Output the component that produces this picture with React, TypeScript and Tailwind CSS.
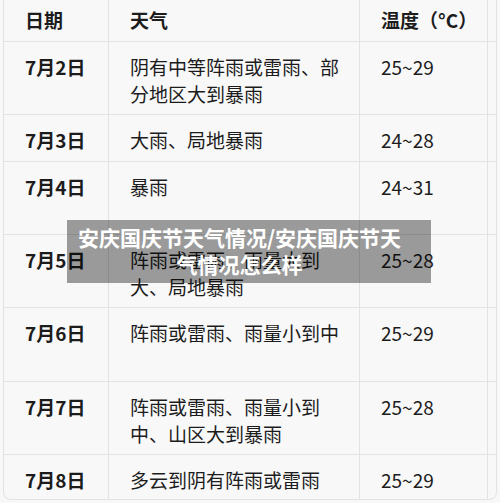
const rows = [
  { date: "7月2日", weather: "阴有中等阵雨或雷雨、部分地区大到暴雨", temp: "25~29", h: "h-[73px]" },
  { date: "7月3日", weather: "大雨、局地暴雨", temp: "24~28", h: "h-[47px]" },
  { date: "7月4日", weather: "暴雨", temp: "24~31", h: "h-[73px]" },
  { date: "7月5日", weather: "阵雨或雷雨、雨量大到大、局地暴雨", temp: "25~28", h: "h-[73px]" },
  { date: "7月6日", weather: "阵雨或雷雨、雨量小到中", temp: "25~29", h: "h-[74px]" },
  { date: "7月7日", weather: "阵雨或雷雨、雨量小到中、山区大到暴雨", temp: "25~28", h: "h-[73px]" },
  { date: "7月8日", weather: "多云到阴有阵雨或雷雨", temp: "25~29", h: "h-[44px]" },
];

const font = { fontFamily: '"Noto Sans CJK SC", "Noto Sans", sans-serif' };

export default function App() {
  return (
    <div className="relative w-[500px] h-[503px] overflow-hidden bg-[#f8f8f8] text-[#1c1c1c]" style={font}>
      <div className="ml-[3px] w-[494px] border-l border-r border-b border-[#e3e3e3] rounded-b-[8px] overflow-hidden">
        <div className="grid grid-cols-[105px_251px_128px_1fr] h-[42px] border-b border-[#e3e3e3] text-[19px] font-bold">
          <div className="border-r border-[#e3e3e3] pl-[21px] flex items-center">日期</div>
          <div className="border-r border-[#e3e3e3] pl-[21px] flex items-center">天气</div>
          <div className="border-r border-[#e3e3e3] pl-[21px] flex items-center">温度（°C）</div>
          <div></div>
        </div>
        {rows.map((r, i) => (
          <div
            key={r.date}
            className={`grid grid-cols-[105px_251px_128px_1fr] ${r.h} ${i < rows.length - 1 ? "border-b border-[#e3e3e3]" : ""} text-[19px] leading-[27px]`}
          >
            <div className="border-r border-[#e3e3e3] pl-[21px] pt-[11px] font-semibold">{r.date}</div>
            <div className="border-r border-[#e3e3e3] pl-[21px] pr-[12px] pt-[11px]">{r.weather}</div>
            <div className="border-r border-[#e3e3e3] pl-[21px] pt-[11px]">{r.temp}</div>
            <div></div>
          </div>
        ))}
      </div>

      {/* title overlay */}
      <div className="absolute left-[67px] top-[220px] w-[364px] h-[63px] bg-black/[0.38] pl-[5px] pr-[24px] pt-[4px] text-white text-[21px] font-bold leading-[27px] text-center">
        安庆国庆节天气情况/安庆国庆节天气情况怎么样
      </div>
    </div>
  );
}
